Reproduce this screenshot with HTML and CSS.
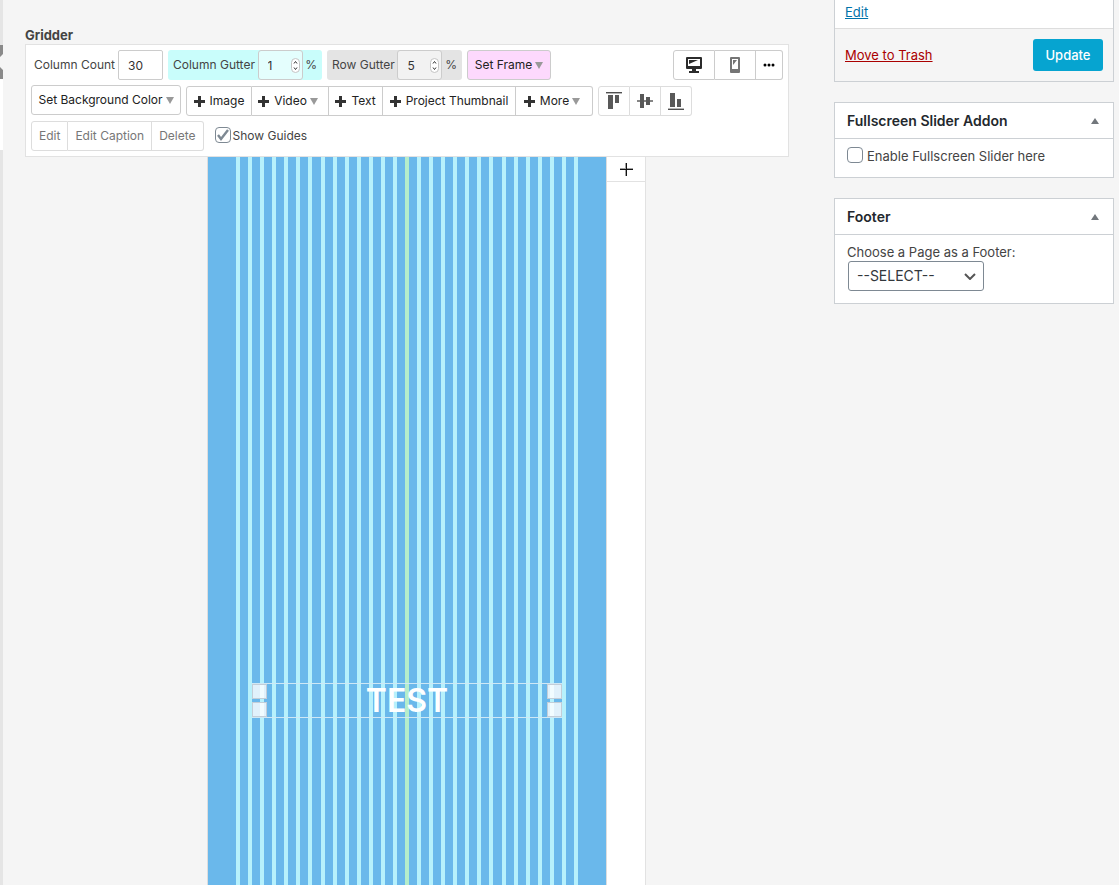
FILE: index.html
```
<!DOCTYPE html>
<html lang="en">
<head>
<meta charset="utf-8">
<meta name="viewport" content="width=device-width, initial-scale=1">
<title>Gridder</title>
<link rel="stylesheet" href="styles.css">
</head>
<body>
<div class="page">
  <div class="menu-edge" aria-hidden="true">
    <svg class="menu-arrow" width="3" height="34" viewBox="0 0 3 34"><path d="M0 0h3v9L0 12zM0 22l3 3v9H0z" fill="#8a8a8a"/></svg>
    <div class="menu-active"></div>
  </div>
  <main class="main">
    <h1 class="title">Gridder</h1>
    <div class="toolbar">
      <div class="row">
        <div class="field plain">
          <label for="count">Column Count</label>
          <input class="number" id="count" type="text" value="30">
        </div>
        <div class="field cyan">
          <label for="colgut">Column Gutter</label>
          <span class="stepper"><input class="number" id="colgut" type="text" value="1"><svg class="spin" width="9" height="15" viewBox="0 0 9 15"><rect x=".5" y=".5" width="8" height="14" rx="4" fill="#fff" stroke="#c4c4c4"/><path d="M3 5.500l1.500-2 1.500 2M3 9.500l1.500 2 1.500-2" fill="none" stroke="#333"/></svg></span>
          <span>%</span>
        </div>
        <div class="field gray">
          <label for="rowgut">Row Gutter</label>
          <span class="stepper"><input class="number" id="rowgut" type="text" value="5"><svg class="spin" width="9" height="15" viewBox="0 0 9 15"><rect x=".5" y=".5" width="8" height="14" rx="4" fill="#fff" stroke="#c4c4c4"/><path d="M3 5.500l1.500-2 1.500 2M3 9.500l1.500 2 1.500-2" fill="none" stroke="#333"/></svg></span>
          <span>%</span>
        </div>
        <button class="btn pink" type="button">Set Frame<svg class="caret" width="8" height="7"><path d="M0 0h8L4 7z"/></svg></button>
        <div class="group devices">
          <button class="btn desktop" type="button" aria-label="Desktop"><svg width="16" height="16" viewBox="0 0 16 16"><path fill-rule="evenodd" d="M1 0h14q1 0 1 1v10q0 1-1 1h-5v2h3v2H3v-2h3v-2H1q-1 0-1-1V1q0-1 1-1zm1 2v7h12V2z" fill="#2b2b2b"/><path d="M3 3h9L3 7z" fill="#2b2b2b"/></svg></button>
          <button class="btn phone" type="button" aria-label="Phone"><svg width="10" height="16" viewBox="0 0 10 16"><path fill-rule="evenodd" d="M1 0h8q1 0 1 1v14q0 1-1 1H1q-1 0-1-1V1q0-1 1-1zm1 2v10h6V2z" fill="#757575"/><path d="M3 3h4L3 8z" fill="#757575"/></svg></button>
          <button class="btn dots" type="button" aria-label="More options"><svg width="12" height="4"><circle cx="2" cy="2" r="1.500"/><circle cx="6" cy="2" r="1.500"/><circle cx="10" cy="2" r="1.500"/></svg></button>
        </div>
      </div>
      <div class="row tools">
        <button class="btn background" type="button">Set Background Color<svg class="caret" width="8" height="7"><path d="M0 0h8L4 7z"/></svg></button>
        <div class="group add">
          <button class="btn image" type="button"><svg class="plus" width="11" height="11"><path d="M4 0h3v4h4v3H7v4H4V7H0V4h4z"/></svg>Image</button>
          <button class="btn video" type="button"><svg class="plus" width="11" height="11"><path d="M4 0h3v4h4v3H7v4H4V7H0V4h4z"/></svg>Video<svg class="caret" width="8" height="7"><path d="M0 0h8L4 7z"/></svg></button>
          <button class="btn text" type="button"><svg class="plus" width="11" height="11"><path d="M4 0h3v4h4v3H7v4H4V7H0V4h4z"/></svg>Text</button>
          <button class="btn thumb" type="button"><svg class="plus" width="11" height="11"><path d="M4 0h3v4h4v3H7v4H4V7H0V4h4z"/></svg>Project Thumbnail</button>
          <button class="btn more" type="button"><svg class="plus" width="11" height="11"><path d="M4 0h3v4h4v3H7v4H4V7H0V4h4z"/></svg>More<svg class="caret" width="8" height="7"><path d="M0 0h8L4 7z"/></svg></button>
        </div>
        <div class="group align">
          <button class="btn" type="button" aria-label="Align top"><svg width="16" height="18"><path d="M0 0h16v1H0z" fill="#505050"/><path d="M0 1h16v1H0z" fill="#b8b8b8"/><path d="M2 3h5v14H2zM9 3h4v8H9z" fill="#595959"/></svg></button>
          <button class="btn" type="button" aria-label="Align middle"><svg width="16" height="18"><path d="M0 8h16v2H0z" fill="#858585"/><path d="M3 2h4v14H3zM9 5h4v8H9z" fill="#595959"/></svg></button>
          <button class="btn" type="button" aria-label="Align bottom"><svg width="16" height="18"><path d="M0 17h16v1H0z" fill="#505050"/><path d="M0 16h16v1H0z" fill="#b8b8b8"/><path d="M2 1h5v14H2zM9 7h4v8H9z" fill="#595959"/></svg></button>
        </div>
      </div>
      <div class="row">
        <div class="group edit">
          <button class="btn" type="button">Edit</button>
          <button class="btn" type="button">Edit Caption</button>
          <button class="btn" type="button">Delete</button>
        </div>
        <label class="check guides-toggle"><input class="box" type="checkbox" checked>Show Guides</label>
      </div>
    </div>
    <div class="stage">
      <div class="canvas">
        <div class="guides" aria-hidden="true">
          <i></i><i></i><i></i><i></i><i></i><i></i><i></i><i></i><i></i><i></i><i></i><i></i><i></i><i></i><i></i><i></i><i></i><i></i><i></i><i></i><i></i><i></i><i></i><i></i><i></i><i></i><i></i><i></i><i></i><i></i>
        </div>
        <div class="block">
          <div class="handles"><span></span><span></span></div>
          <p class="block-text">TEST</p>
          <div class="handles"><span></span><span></span></div>
        </div>
      </div>
      <div class="side">
        <button class="add-row" type="button" aria-label="Add"><svg width="13" height="13"><path d="M0 6h13v1H0zM6 0h1v13H6z" fill="#111"/><path d="M0 5h13v1H0zM5 0h1v13H5z" fill="#111" opacity=".4"/></svg></button>
      </div>
    </div>
  </main>
  <aside class="sidebar">
    <section class="panel publish">
      <div class="publish-top"><a class="link" href="#">Edit</a></div>
      <div class="actions"><a class="link trash" href="#">Move to Trash</a><button class="update" type="button">Update</button></div>
    </section>
    <section class="panel">
      <h2 class="panel-title">Fullscreen Slider Addon<svg width="8" height="6"><path d="M4 0l4 6H0z" fill="#72777c"/></svg></h2>
      <div class="panel-body slider"><label class="check"><input class="box" type="checkbox">Enable Fullscreen Slider here</label></div>
    </section>
    <section class="panel">
      <h2 class="panel-title">Footer<svg width="8" height="6"><path d="M4 0l4 6H0z" fill="#72777c"/></svg></h2>
      <div class="panel-body footer">
        <label for="footer">Choose a Page as a Footer:</label>
        <div class="select-wrap"><select class="select" id="footer"><option>--SELECT--</option></select><svg class="chevron" width="12" height="7"><path d="M1 1l5 5 5-5" fill="none" stroke="#555" stroke-width="2"/></svg></div>
      </div>
    </section>
  </aside>
</div>
</body>
</html>
```
FILE: styles.css
```
* { box-sizing: border-box; }
body {
  margin: 0;
  background: #f5f5f5;
  color: #444;
  font: 13px/18px Inter, "Liberation Sans", sans-serif;
}
svg { display: block; flex: none; }
button, input, select { font: inherit; margin: 0; }
.page {
  display: grid;
  grid-template-columns: 3px minmax(0, 1fr) 280px;
  min-height: 100vh;
  padding-right: 5px;
}
.menu-edge { background: #e5e5e5; padding-top: 45px; }
.menu-active { height: 71px; background: #fff; }
.menu-arrow { background: #f5f5f5; }
.main {
  display: flex;
  flex-direction: column;
  padding: 26px 45px 0 22px;
}
.title { margin: 0; font-size: 13px; line-height: 18px; font-weight: 700; }
.toolbar {
  display: flex;
  flex-direction: column;
  gap: 5px;
  padding: 5px;
  background: #fff;
  border: 1px solid #e2e2e2;
  font-size: 12px;
}
.row { display: flex; gap: 5px; height: 30px; align-items: center; }
.tools { height: 31px; align-items: flex-end; }
.row .btn, .field, .row .number { height: 30px; }
.field {
  display: flex;
  align-items: center;
  justify-content: space-between;
  padding: 0 5px;
  border-radius: 3px;
  white-space: nowrap;
}
.field.plain { width: 132px; padding: 0 0 0 3px; }
.field.cyan { width: 154px; background: #c9fdfb; }
.field.gray { width: 135px; background: #e4e4e4; }
.number {
  width: 45px;
  padding: 0 9px;
  color: #333;
  background: rgba(255, 255, 255, .5);
  border: 1px solid #ccc;
  border-radius: 2px;
}
.stepper { position: relative; }
.stepper .number { display: block; border-radius: 3px; }
.spin { position: absolute; right: 3px; top: 8px; }
.btn {
  display: flex;
  align-items: center;
  justify-content: center;
  padding: 0;
  color: #222;
  background: #fff;
  border: 1px solid #ccc;
  border-radius: 3px;
  white-space: nowrap;
}
.caret { margin-left: 3px; fill: #999; }
.plus { margin-right: 5px; fill: #333; }
.pink { width: 84px; background: #fdd9fd; }
.background { width: 150px; align-self: flex-start; }
.group { display: flex; }
.group .btn { border-radius: 0; }
.group .btn + .btn { border-left: 0; }
.group .btn:first-child { border-radius: 3px 0 0 3px; }
.group .btn:last-child { border-radius: 0 3px 3px 0; }
.devices { margin-left: auto; }
.desktop { width: 42px; }
.phone { width: 41px; }
.dots { width: 27px; }
.image { width: 66px; }
.video { width: 77px; }
.video, .more { padding-right: 4px; }
.text { width: 54px; }
.thumb { width: 133px; }
.more { width: 77px; }
.align .btn { width: 31px; border-color: #ddd; }
.align .btn:first-child { width: 32px; }
.edit .btn { padding: 0 7px; color: #777; border-color: #ddd; }
.check { display: flex; align-items: center; gap: 4px; }
.guides-toggle { margin-left: 6px; gap: 2px; }
.box {
  appearance: none;
  width: 16px;
  height: 16px;
  background: #fff;
  border: 1px solid #7e8993;
  border-radius: 4px;
}
.check .box { margin-bottom: 2px; }
.box:checked {
  background: #fff url("data:image/svg+xml,%3Csvg xmlns='http://www.w3.org/2000/svg' viewBox='0 0 14 14'%3E%3Cpath d='M2 7l3 4 7-9' fill='none' stroke='%237e8993' stroke-width='2.4'/%3E%3C/svg%3E");
}
.stage {
  flex: 1;
  display: grid;
  grid-template-columns: minmax(0, 1fr) 39px;
  padding: 0 143px 0 182px;
}
.canvas {
  position: relative;
  padding: 526px 44px 0;
  background: #6ab8eb;
  border: solid #ddd;
  border-width: 0 1px;
}
.guides {
  position: absolute;
  inset: 0 20px;
  display: grid;
  grid-template-columns: repeat(30, minmax(0, 1fr));
  column-gap: 4px;
  background: linear-gradient(#b5edcb, #b5edcb) center / 4px 100% no-repeat #b7f1fc;
}
.guides i { background: #6ab8eb; }
.block {
  position: relative;
  display: flex;
  justify-content: space-between;
  height: 35px;
  border: solid #cfe8f5;
  border-width: 1px 0;
}
.handles { display: flex; flex-direction: column; justify-content: space-between; }
.handles span {
  width: 15px;
  height: 15px;
  background: rgba(255, 255, 255, .8);
  border: 1px solid #c3ced8;
}
.block-text {
  margin: 0;
  color: #fff;
  font-size: 32px;
  line-height: 33px;
  font-weight: 600;
}
.side { background: #fff; border-right: 1px solid #e2e2e2; }
.add-row {
  display: flex;
  align-items: center;
  justify-content: center;
  width: 100%;
  height: 25px;
  padding: 0;
  background: #fff;
  border: 0;
  border-bottom: 1px solid #e2e2e2;
}
.sidebar { display: flex; flex-direction: column; gap: 20px; }
.panel { background: #fff; border: 1px solid #ccd0d4; }
.publish { border-top: 0; }
.publish-top { padding: 3px 10px 7px; }
.link { color: #0073aa; }
.trash { color: #a00; }
.actions {
  display: flex;
  align-items: center;
  justify-content: space-between;
  padding: 10px;
  background: #f5f5f5;
  border-top: 1px solid #ddd;
}
.update {
  width: 70px;
  height: 32px;
  padding: 0;
  color: #fff;
  background: #06a4d0;
  border: 0;
  border-radius: 3px;
  font-weight: 500;
}
.panel-title {
  display: flex;
  align-items: center;
  justify-content: space-between;
  height: 36px;
  margin: 0;
  padding: 0 14px 0 12px;
  border-bottom: 1px solid #ccd0d4;
  color: #23282d;
  font-size: 14px;
  line-height: 20px;
  font-weight: 600;
}
.panel-body { padding: 0 12px; }
.slider { padding: 8px 12px 12px; }
.footer { padding: 9px 12px 12px; }
.footer label { display: block; line-height: 17px; }
.select-wrap { position: relative; width: 136px; margin-left: 1px; }
.select {
  display: block;
  appearance: none;
  width: 100%;
  height: 30px;
  padding: 0 8px;
  color: #32373c;
  background: #fff;
  border: 1px solid #7e8993;
  border-radius: 3px;
  font-size: 14px;
}
.chevron { position: absolute; right: 8px; top: 12px; pointer-events: none; }
```
